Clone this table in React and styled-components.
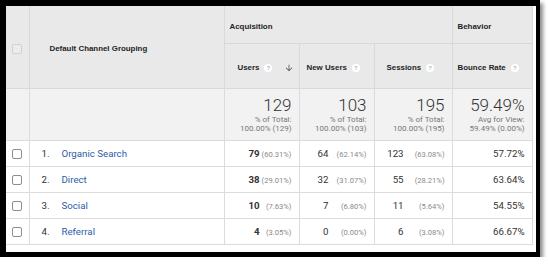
import React from "react";
import styled, { createGlobalStyle } from "styled-components";

const Global = createGlobalStyle`
  html, body { margin: 0; padding: 0; background: #fff; }
  body { font-family: Roboto, "Liberation Sans", Arial, sans-serif; }
`;

const Frame = styled.div`
  width: 530px;
  height: 246px;
  border-style: solid;
  border-color: #000;
  border-width: 6px 4px 5px 6px;
  background: #fff;
  box-shadow: 3px 3px 4px rgba(0, 0, 0, 0.45);
`;

const Table = styled.table`
  width: 526px;
  border-collapse: collapse;
  table-layout: fixed;
  font-family: Roboto, "Liberation Sans", Arial, sans-serif;
  color: #333;

  tr > *:first-child { border-left: none; }
  thead tr:first-child > * { border-top: none; }
`;

const HeadCell = styled.th`
  background: #e9e9e9;
  border: 1px solid #d9d9d9;
  height: ${(p) => p.$h || 0}px;
  padding: 3px 0 0 ${(p) => p.$pad || 0}px;
  text-align: ${(p) => p.$align || "left"};
  vertical-align: middle;
  font-family: "Liberation Sans", Arial, sans-serif;
  font-weight: bold;
  font-size: 7.9px;
  color: #1f1f1f;
  white-space: nowrap;
`;

const HeadLabel = styled.span`
  display: inline-flex;
  align-items: center;
`;

const Help = styled.span`
  display: inline-flex;
  align-items: center;
  justify-content: center;
  width: 8px;
  height: 8px;
  margin-left: 5px;
  border-radius: 50%;
  background: #fff;
  color: #b8b8b8;
  font-size: 6px;
  font-weight: bold;
  line-height: 1;
`;

const SortIcon = styled.svg`
  width: 10px;
  height: 10px;
  margin-left: 12px;
  fill: #555;
`;

const Checkbox = styled.span`
  display: inline-block;
  box-sizing: border-box;
  width: 10px;
  height: 10px;
  border-radius: 2px;
  border: 1px solid ${(p) => (p.$disabled ? "#d2d2d2" : "#8d8d8d")};
  background: ${(p) => (p.$disabled ? "#ececec" : "#fff")};
  vertical-align: middle;
`;

const Cell = styled.td`
  height: ${(p) => p.$h || 25}px;
  border: 1px solid #dcdcdc;
  padding: ${(p) => (p.$align === "left" ? "0 0 0 12px" : "0 7px 0 0")};
  text-align: ${(p) => p.$align || "right"};
  vertical-align: middle;
  font-size: 9.7px;
  background: ${(p) => (p.$shade ? "#f2f2f2" : "#fff")};
  white-space: nowrap;
`;

const CheckCell = styled(Cell)`
  padding: 0;
  text-align: center;
`;

const Index = styled.span`
  display: inline-block;
  width: 20px;
  color: #333;
`;

const Name = styled.a`
  color: #2c5da9;
  text-decoration: none;
`;

const Num = styled.span`
  font-weight: ${(p) => (p.$bold ? 700 : 400)};
  color: #333;
`;

const Pct = styled.span`
  display: inline-block;
  width: ${(p) => p.$w}px;
  text-align: right;
  font-size: 7.6px;
  color: #8a8a8a;
`;

const Big = styled.div`
  font-size: 17px;
  font-weight: 300;
  line-height: 19px;
  color: #333;
`;

const Small = styled.div`
  font-size: 8px;
  line-height: 9px;
  color: #777;
`;

const columns = [
  { key: "users", label: "Users", pad: 13, sorted: true, bold: true, pctW: 32 },
  { key: "newUsers", label: "New Users", pad: 7, pctW: 38 },
  { key: "sessions", label: "Sessions", pad: 12, pctW: 41 },
  { key: "bounce", label: "Bounce Rate", pad: 5 },
];

const totals = [
  { value: "129", caption: "% of Total:", detail: "100.00% (129)" },
  { value: "103", caption: "% of Total:", detail: "100.00% (103)" },
  { value: "195", caption: "% of Total:", detail: "100.00% (195)" },
  { value: "59.49%", caption: "Avg for View:", detail: "59.49% (0.00%)" },
];

const rows = [
  { name: "Organic Search", users: ["79", "(60.31%)"], newUsers: ["64", "(62.14%)"], sessions: ["123", "(63.08%)"], bounce: "57.72%" },
  { name: "Direct", users: ["38", "(29.01%)"], newUsers: ["32", "(31.07%)"], sessions: ["55", "(28.21%)"], bounce: "63.64%" },
  { name: "Social", users: ["10", "(7.63%)"], newUsers: ["7", "(6.80%)"], sessions: ["11", "(5.64%)"], bounce: "54.55%" },
  { name: "Referral", users: ["4", "(3.05%)"], newUsers: ["0", "(0.00%)"], sessions: ["6", "(3.08%)"], bounce: "66.67%" },
];

export default function App() {
  return (
    <>
      <Global />
      <Frame>
        <Table>
          <colgroup>
            <col style={{ width: 23 }} />
            <col style={{ width: 195 }} />
            <col style={{ width: 75 }} />
            <col style={{ width: 75 }} />
            <col style={{ width: 78 }} />
            <col style={{ width: 80 }} />
          </colgroup>
          <thead>
            <tr>
              <HeadCell rowSpan={2} $align="center" $h={34}>
                <Checkbox $disabled />
              </HeadCell>
              <HeadCell rowSpan={2} $pad={20}>Default Channel Grouping</HeadCell>
              <HeadCell colSpan={3} $pad={5} $h={34}>Acquisition</HeadCell>
              <HeadCell $pad={5}>Behavior</HeadCell>
            </tr>
            <tr>
              {columns.map((c) => (
                <HeadCell key={c.key} $pad={c.pad} $h={41}>
                  <HeadLabel>
                    {c.label}
                    <Help>?</Help>
                    {c.sorted && (
                      <SortIcon viewBox="0 0 24 24">
                        <path d="M20 12l-1.41-1.41L13 16.17V4h-2v12.17l-5.58-5.59L4 12l8 8 8-8z" />
                      </SortIcon>
                    )}
                  </HeadLabel>
                </HeadCell>
              ))}
            </tr>
          </thead>
          <tbody>
            <tr>
              <Cell $shade $h={51} />
              <Cell $shade />
              {totals.map((t) => (
                <Cell key={t.value} $shade>
                  <Big>{t.value}</Big>
                  <Small>{t.caption}</Small>
                  <Small>{t.detail}</Small>
                </Cell>
              ))}
            </tr>
            {rows.map((r, i) => (
              <tr key={r.name}>
                <CheckCell $h={25}>
                  <Checkbox />
                </CheckCell>
                <Cell $align="left">
                  <Index>{i + 1}.</Index>
                  <Name href="#">{r.name}</Name>
                </Cell>
                {columns.slice(0, 3).map((c) => (
                  <Cell key={c.key}>
                    <Num $bold={c.bold}>{r[c.key][0]}</Num>
                    <Pct $w={c.pctW}>{r[c.key][1]}</Pct>
                  </Cell>
                ))}
                <Cell>{r.bounce}</Cell>
              </tr>
            ))}
          </tbody>
        </Table>
      </Frame>
    </>
  );
}
